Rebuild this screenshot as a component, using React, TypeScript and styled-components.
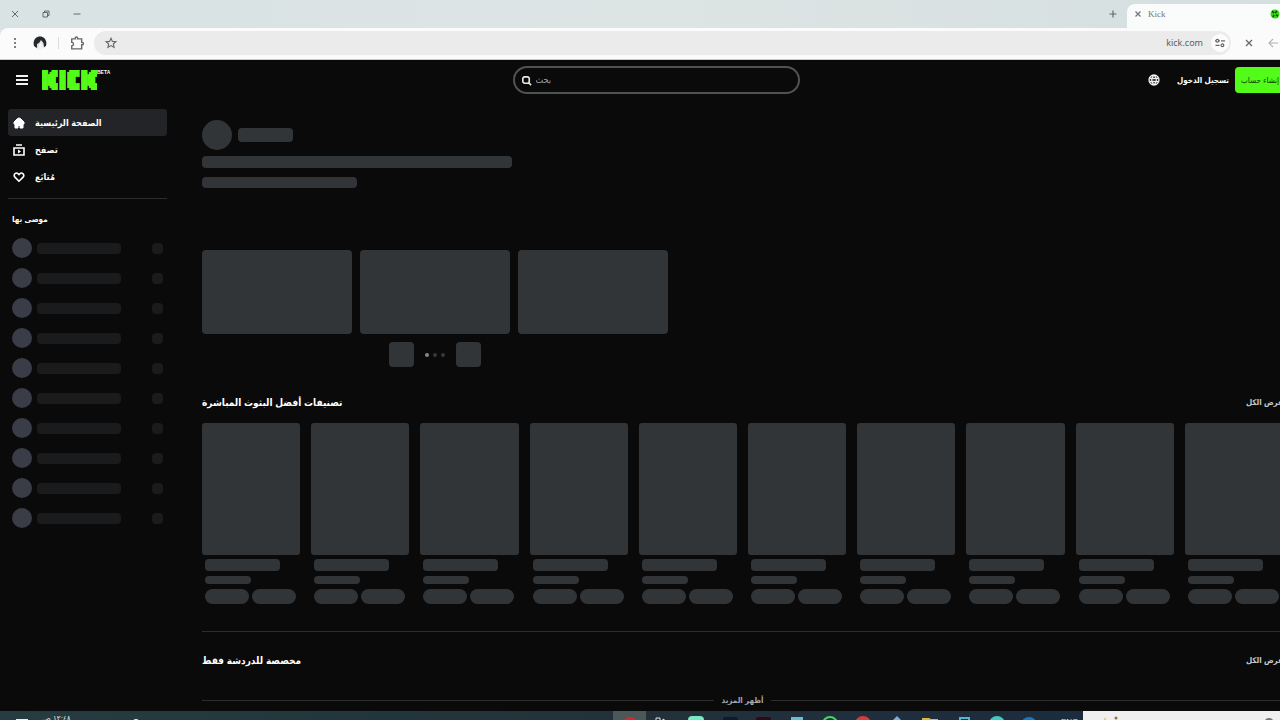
import React from "react";
import styled, { createGlobalStyle } from "styled-components";

const Global = createGlobalStyle`
  * { box-sizing: border-box; }
  html, body { margin: 0; background: #0a0a0a; }
  body { font-family: "Liberation Sans", "DejaVu Sans Condensed", "DejaVu Sans", sans-serif; overflow: hidden; }
  button, input { font: inherit; color: inherit; }
  button { border: 0; padding: 0; background: none; cursor: pointer; display: flex; align-items: center; justify-content: center; }
  a { color: inherit; text-decoration: none; }
  svg { display: block; flex: none; }
`;

/* The desktop runs past the right edge of the window, so the screen clips it. */
const Screen = styled.div`
  height: 100vh;
  overflow: hidden;
`;
const Desktop = styled.div`
  width: calc(100% + 20px);
  height: 100%;
  display: flex;
  flex-direction: column;
`;

/* ---------- browser chrome ---------- */
const Browser = styled.div`
  flex: none;
  background: linear-gradient(90deg, #d9e3e4, #dde4e4 50%, #d5dfe0);
  color: #64696b;
`;
const TabStrip = styled.div`
  height: 28px;
  display: flex;
  align-items: stretch;
`;
const WindowButtons = styled.div`
  flex: 1;
  display: flex;
  align-items: center;
  gap: 19px;
  padding-left: 9px;
`;
const IconButton = styled.button<{ $size?: number }>`
  width: ${(p) => p.$size ?? 12}px;
  height: ${(p) => p.$size ?? 12}px;
  flex: none;
`;
const NewTab = styled(IconButton)`
  align-self: center;
  margin-right: 8px;
`;
const Tab = styled.div`
  width: 173px;
  margin-top: 4px;
  padding: 0 20px 4px 5px;
  display: flex;
  align-items: center;
  gap: 4px;
  border-radius: 8px 8px 0 0;
  background: #fafbfb;
  font: 9px "Liberation Serif", serif;
  color: #777;
`;
const TabTitle = styled.span`
  flex: 1;
`;
const Toolbar = styled.div`
  height: 32px;
  padding: 0 21px 2px 8px;
  display: flex;
  align-items: center;
  background: #fbfbfb;
  border-bottom: 1px solid #c9c9c9;
  border-radius: 8px 0 0 0;
`;
const Tools = styled.div`
  display: flex;
  align-items: center;
  gap: 11px;
  margin-right: 10px;
`;
const ToolDivider = styled.span`
  width: 1px;
  height: 12px;
  background: #d8dcdc;
`;
const Omnibox = styled.div`
  flex: 1;
  height: 24px;
  padding: 0 2px 0 11px;
  display: flex;
  align-items: center;
  gap: 6px;
  border-radius: 12px;
  background: #ebebeb;
`;
const Address = styled.input`
  flex: 1;
  min-width: 0;
  border: 0;
  outline: 0;
  background: none;
  text-align: right;
  font: 9px "Noto Sans", sans-serif;
  color: #5e6060;
`;
const SiteInfo = styled(IconButton)`
  border-radius: 50%;
  background: #fcfcfc;
`;
const NavTools = styled.div`
  display: flex;
  gap: 12px;
  margin-left: 12px;
`;

/* ---------- site ---------- */
const Site = styled.div`
  flex: 1;
  min-height: 0;
  overflow: hidden;
  background: #0a0a0a;
  color: #fff;
`;
const Header = styled.header`
  height: 40px;
  padding: 0 4px 0 16px;
  display: grid;
  grid-template-columns: 1fr 287px 1fr;
  align-items: center;
`;
const Brand = styled.div`
  display: flex;
  align-items: center;
  gap: 14px;
`;
const LogoLink = styled.a`
  display: flex;
  align-items: flex-start;
`;
const Beta = styled.span`
  font: bold 5px/5px "Liberation Sans", sans-serif;
`;
const Search = styled.label`
  height: 28px;
  display: flex;
  align-items: center;
  gap: 4px;
  padding: 0 6px;
  border: 2px solid #515253;
  border-radius: 14px;
`;
const SearchInput = styled.input`
  flex: 1;
  min-width: 0;
  border: 0;
  outline: 0;
  padding: 0;
  background: none;
  font-size: 9px;
  &::placeholder { color: #a2a4a6; opacity: 1; }
`;
const Account = styled.div`
  display: flex;
  align-items: center;
  justify-content: flex-end;
`;
const Login = styled.a`
  margin: 0 10px 0 17px;
  width: 48px;
  white-space: nowrap;
  font-size: 8px;
  font-weight: bold;
`;
const SignUp = styled.button`
  width: 61px;
  height: 26px;
  border-radius: 4px;
  background: #53fc18;
  color: #0d3a04;
  font-size: 8px;
  white-space: nowrap;
  padding: 0 6px;
  justify-content: flex-start;
`;
const Body = styled.div`
  display: grid;
  grid-template-columns: 159px minmax(0, 1fr);
  column-gap: 35px;
  padding: 0 17px 0 8px;
`;
const Sidebar = styled.aside`
  padding-top: 9px;
`;
const NavItem = styled.a<{ $active?: boolean }>`
  height: 27px;
  padding-left: 5px;
  display: flex;
  align-items: center;
  gap: 10px;
  border-radius: 3px;
  background: ${(p) => (p.$active ? "#232427" : "transparent")};
  font-size: 9px;
  font-weight: bold;
`;
const Rule = styled.hr`
  width: 100%;
  height: 1px;
  margin: 0;
  border: 0;
  background: #2c2d2f;
`;
const SideRule = styled(Rule)`
  margin-top: 8px;
`;
const SideTitle = styled.h2`
  margin: 14px 4px 12px;
  font-size: 8px;
  line-height: 13px;
`;
const ChannelList = styled.ul`
  list-style: none;
  margin: 0;
  padding: 0 4px;
  display: flex;
  flex-direction: column;
  gap: 10px;
`;
const Channel = styled.li`
  display: flex;
  align-items: center;
  justify-content: space-between;
`;
const ChannelName = styled.span`
  display: flex;
  align-items: center;
  gap: 5px;
`;
const Bone = styled.span<{ $w?: number; $h: number; $r?: number; $tone?: string }>`
  display: block;
  flex: none;
  width: ${(p) => (p.$w ? `${p.$w}px` : "100%")};
  height: ${(p) => p.$h}px;
  border-radius: ${(p) => p.$r ?? 4}px;
  background: ${(p) => p.$tone ?? "#323538"};
`;
const Main = styled.main`
  padding-top: 20px;
`;
const Row = styled.div<{ $gap: number }>`
  display: flex;
  align-items: center;
  gap: ${(p) => p.$gap}px;
`;
const Intro = styled.section`
  display: flex;
  flex-direction: column;
  align-items: flex-start;
`;
const IntroLines = styled.div`
  display: flex;
  flex-direction: column;
  gap: 9px;
  margin-top: 6px;
`;
const Carousel = styled.section`
  width: 466px;
  margin-top: 62px;
`;
const Tiles = styled.div`
  display: grid;
  grid-template-columns: repeat(3, 1fr);
  gap: 8px;
`;
const Controls = styled.div`
  display: flex;
  justify-content: center;
  align-items: center;
  gap: 11px;
  margin-top: 8px;
`;
const Pager = styled.button`
  width: 25px;
  height: 25px;
  border-radius: 4px;
  background: #323538;
`;
const Dot = styled.span<{ $on?: boolean }>`
  width: 4px;
  height: 4px;
  border-radius: 50%;
  background: ${(p) => (p.$on ? "#85888a" : "#36393b")};
`;
const SectionHead = styled.div`
  height: 24px;
  display: flex;
  align-items: center;
  justify-content: space-between;
`;
const CategoryHead = styled(SectionHead)`
  margin: 23px 0 9px;
`;
const ChatHead = styled(SectionHead)`
  margin: 16px 0 20px;
`;
const Title = styled.h2`
  margin: 0;
  font-size: 10px;
`;
const ViewAll = styled.a`
  color: #c4c6c8;
  font-size: 8px;
  font-weight: bold;
`;
const Cards = styled.div`
  display: grid;
  grid-template-columns: repeat(10, minmax(0, 1fr));
  gap: 11px;
  margin-bottom: 27px;
`;
const CardText = styled.div`
  display: flex;
  flex-direction: column;
  padding: 4px 3px 0;
  gap: 5px;
`;
const ShowMore = styled.div`
  display: flex;
  align-items: center;
  gap: 7px;
`;
const MoreButton = styled.button`
  flex: none;
  height: 16px;
  color: #a4a6a8;
  font-size: 8px;
  font-weight: bold;
`;

/* ---------- taskbar ---------- */
const Taskbar = styled.footer`
  flex: none;
  height: 9px;
  overflow: hidden;
  display: flex;
  align-items: flex-start;
  background: linear-gradient(90deg, #263c41, #223139 50%, #1c2c40 84%);
`;
const Tray = styled.div`
  flex: 1;
  display: flex;
  padding: 2px 0 0 16px;
  color: #e8eef0;
`;
const Clock = styled.time`
  margin: 0 66px 0 14px;
  width: 24px;
  white-space: nowrap;
  font-size: 8px;
  line-height: 12px;
`;
const Apps = styled.div`
  width: 434px;
  display: grid;
  grid-template-columns: repeat(13, 1fr);
`;
const AppButton = styled.button<{ $active?: boolean }>`
  height: 30px;
  align-items: flex-start;
  padding-top: 5px;
  background: ${(p) => (p.$active ? "#4b5759" : "transparent")};
`;
const Lang = styled.span`
  width: 36px;
  padding: 6px 0 0 14px;
  color: #dfe6ea;
  font-size: 8px;
  line-height: 10px;
`;
const TaskSearch = styled.div`
  width: 217px;
  height: 30px;
  padding: 4px 0 0 16px;
  background: #efefef;
`;

type IconProps = { d: string; size?: number; w?: number; fill?: string; color?: string };
const Icon = ({ d, size = 12, w = 1, fill = "none", color = "currentColor" }: IconProps) => (
  <svg width={size} height={size} viewBox="0 0 12 12" fill={fill} stroke={color} strokeWidth={w} aria-hidden="true">
    <path d={d} />
  </svg>
);

/* Block pattern of the KICK logo: [x, y, width, height] on a 28 x 9 grid. */
const K = [
  [0, 0, 3, 9], [3, 2, 2, 5], [4, 1, 2, 7], [5, 0, 3, 3], [5, 2, 2, 5], [5, 6, 3, 3],
];
const blocks = [
  ...K,
  [9, 0, 3, 9],
  [13, 1, 3, 7], [14, 0, 5, 3], [14, 6, 5, 3], [16, 2, 1, 5],
  ...K.map(([x, y, w, h]) => [x + 20, y, w, h]),
];
const Logo = () => (
  <svg width="55" height="20" viewBox="0 0 28 9" preserveAspectRatio="none" fill="#53fc18" stroke="#53fc18" strokeWidth="0.3" aria-label="KICK">
    {blocks.map(([x, y, w, h], i) => (
      <rect key={i} x={x} y={y} width={w} height={h} />
    ))}
  </svg>
);

const apps = [
  ["متصفح", <circle cx="9" cy="9" r="8" fill="#d3282f" />],
  ["ملاحظات", <path d="M2 2h4v3h3V3l3 2 4 2v9H2z" fill="#22282c" stroke="#e6e6e6" />],
  ["دردشة", <rect x="1" y="0" width="16" height="16" rx="4" fill="#78e8c3" />],
  ["صور", <rect x="2" y="1" width="15" height="15" rx="2" fill="#0c1b30" />],
  ["فيديو", <rect x="2" y="1" width="15" height="15" rx="2" fill="#310914" />],
  ["مستندات", <path d="M3 1h12v15H3z" fill="#66bfd0" />],
  ["رسائل", <circle cx="9" cy="8" r="7" fill="#173927" stroke="#4bd35f" strokeWidth="2" />],
  ["موسيقى", <circle cx="9" cy="8" r="8" fill="#d83b3b" />],
  ["أدوات", <path d="M9 0l8 8-8 8-8-8z" fill="#82aadd" />],
  ["ملفات", <path d="M1 2h7l2 1h7v13H1z" fill="#d9b83c" />],
  ["هاتف", <rect x="5" y="2" width="9" height="14" fill="#173348" stroke="#4fb8d6" strokeWidth="2" />],
  ["متصفح ثان", <circle cx="9" cy="8" r="8" fill="#43c9c0" />],
  ["متجر", <circle cx="8" cy="9" r="8" fill="#1779bd" />],
] as const;

const HEART = "M6 10.2 1.9 6.1a2.3 2.3 0 0 1 0-3.3 2.4 2.4 0 0 1 3.3 0l.8.8.8-.8a2.4 2.4 0 0 1 3.3 0 2.3 2.3 0 0 1 0 3.3z";

export default function App() {
  return (
    <Screen>
      <Global />
      <Desktop>
        <Browser>
          <TabStrip>
            <WindowButtons>
              <IconButton aria-label="إغلاق"><Icon d="M3 3l6 6M9 3l-6 6" /></IconButton>
              <IconButton aria-label="استعادة"><Icon d="M3 4.5h4.5V9H3zM4.5 4.5V3H9v4.5H7.5" w={1} /></IconButton>
              <IconButton aria-label="تصغير"><Icon d="M2.5 6h7" /></IconButton>
            </WindowButtons>
            <NewTab aria-label="علامة تبويب جديدة"><Icon d="M6 2.5v7M2.5 6h7" w={1.2} /></NewTab>
            <Tab>
              <IconButton aria-label="إغلاق علامة التبويب"><Icon d="M3.5 3.5l5 5M8.500 3.500l-5 5" w={1.3} /></IconButton>
              <TabTitle>Kick</TabTitle>
              <svg width="10" height="10" viewBox="0 0 10 10" aria-hidden="true">
                <circle cx="5" cy="5" r="4.500" fill="#32d512" />
                <path d="M2 2l2 2M5 4l2-2M4 6l-1 2M6 6l2 1" stroke="#0b3d05" strokeWidth="1.400" />
              </svg>
            </Tab>
          </TabStrip>
          <Toolbar>
            <Tools>
              <IconButton aria-label="القائمة" $size={14}>
                <svg width="14" height="14" fill="#55585a"><circle cx="7" cy="3" r="1" /><circle cx="7" cy="7" r="1" /><circle cx="7" cy="11" r="1" /></svg>
              </IconButton>
              <IconButton aria-label="الملف الشخصي" $size={14}>
                <svg width="14" height="14" viewBox="0 0 14 14">
                  <circle cx="7" cy="7" r="6.500" fill="#dfe2e2" />
                  <path d="M1 10C-.5 4 3 .5 7 .5s7.500 3.500 6 9.500l-2 1-.5-4L8 4 6 7l-2 1v4z" fill="#24282b" />
                  <path d="M5 13l1-4 2-3 2 4v3z" fill="#f4f4f4" />
                </svg>
              </IconButton>
              <ToolDivider />
              <IconButton aria-label="الإضافات" $size={14}>
                <Icon size={14} w={1.2} d="M1.500 2.500h3V1.800a1 1 0 0 1 2 0v.7H10v3h.5a1 1 0 0 1 0 2H10V11H1.500V8.500a1.500 1.500 0 0 0 0-3z" />
              </IconButton>
            </Tools>
            <Omnibox>
              <IconButton aria-label="إضافة إشارة">
                <Icon w={1.1} d="M6 1.200l1.400 3.200 3.500.3-2.600 2.300.8 3.400L6 8.600l-3.100 1.800.8-3.400L1.100 4.700l3.500-.3z" />
              </IconButton>
              <Address aria-label="العنوان" defaultValue="kick.com" dir="ltr" />
              <SiteInfo aria-label="معلومات الموقع" $size={18}>
                <Icon w={1.2} d="M1 3.800h1M4.800 3.800H6M2 3.800a1.400 1.400 0 1 0 2.800 0 1.400 1.400 0 1 0-2.800 0M7 3.800h4M1.500 8.300h4M7 8.300a1.400 1.400 0 1 0 2.800 0 1.400 1.400 0 1 0-2.800 0" />
              </SiteInfo>
            </Omnibox>
            <NavTools>
              <IconButton aria-label="إيقاف"><Icon w={1.3} d="M3 3l6 6M9 3l-6 6" /></IconButton>
              <IconButton aria-label="رجوع"><Icon w={1.2} color="#b0b3b4" d="M11 6H2M6 2L2 6l4 4" /></IconButton>
            </NavTools>
          </Toolbar>
        </Browser>

        <Site>
          <Header>
            <Brand>
              <IconButton aria-label="القائمة الجانبية"><Icon w={1.8} color="#f2f2f2" d="M0 2h12M0 6h12M0 10h12" /></IconButton>
              <LogoLink href="#home"><Logo /><Beta>BETA</Beta></LogoLink>
            </Brand>
            <Search>
              <Icon size={11} w={1.8} color="#e4e4e4" d="M2 3.500L3.500 2h4L9 3.500v4L7.500 9h-4L2 7.500zM8 8l3 3" />
              <SearchInput aria-label="بحث" placeholder="بحث" />
            </Search>
            <Account>
              <IconButton aria-label="اللغة">
                <Icon w={1.3} color="#f0f0f0" d="M6 1a5 5 0 1 0 0 10A5 5 0 1 0 6 1zM6 1C3 4 3 8 6 11M6 1c3 3 3 7 0 10M1 4.500h10M1 7.500h10" />
              </IconButton>
              <Login href="#login">تسجيل الدخول</Login>
              <SignUp>إنشاء حساب</SignUp>
            </Account>
          </Header>

          <Body>
            <Sidebar>
              <nav>
                <NavItem href="#home" $active>
                  <Icon fill="#fff" w={1} d="M6 1l1.500.5L11 5v2h-1v4H7V8.500H5V11H2V7H1V5l3.500-3.500z" />
                  الصفحة الرئيسية
                </NavItem>
                <NavItem href="#browse">
                  <svg width="12" height="12" viewBox="0 0 12 12" fill="none" stroke="#fff" strokeWidth="1.600">
                    <path d="M1 4h10v7H1zM3 1h6" /><path d="M5 5.600L8 7.500 5 9.400z" fill="#fff" stroke="none" />
                  </svg>
                  تصفح
                </NavItem>
                <NavItem href="#following"><Icon w={1.6} d={HEART} />مُتابَع</NavItem>
              </nav>
              <SideRule />
              <SideTitle>موصى بها</SideTitle>
              <ChannelList>
                {Array.from({ length: 10 }, (_, i) => (
                  <Channel key={i}>
                    <ChannelName>
                      <Bone $w={20} $h={20} $r={10} $tone="#3a3c47" />
                      <Bone $w={84} $h={11} $tone="#1a1b1d" />
                    </ChannelName>
                    <Bone $w={11} $h={11} $tone="#1a1b1d" />
                  </Channel>
                ))}
              </ChannelList>
            </Sidebar>

            <Main>
              <Intro>
                <Row $gap={6}>
                  <Bone $w={30} $h={30} $r={15} />
                  <Bone $w={55} $h={14} />
                </Row>
                <IntroLines>
                  <Bone $w={310} $h={12} />
                  <Bone $w={155} $h={11} />
                </IntroLines>
              </Intro>
              <Carousel>
                <Tiles><Bone $h={84} /><Bone $h={84} /><Bone $h={84} /></Tiles>
                <Controls>
                  <Pager aria-label="السابق" />
                  <Row $gap={4}><Dot $on /><Dot /><Dot /></Row>
                  <Pager aria-label="التالي" />
                </Controls>
              </Carousel>

              <CategoryHead>
                <Title>تصنيفات أفضل البثوث المباشرة</Title>
                <ViewAll href="#categories">عرض الكل</ViewAll>
              </CategoryHead>
              <Cards>
                {Array.from({ length: 10 }, (_, i) => (
                  <div key={i}>
                    <Bone $h={132} $r={3} />
                    <CardText>
                      <Bone $w={75} $h={12} />
                      <Bone $w={46} $h={8} />
                      <Row $gap={3}>
                        <Bone $w={44} $h={15} $r={8} />
                        <Bone $w={44} $h={15} $r={8} />
                      </Row>
                    </CardText>
                  </div>
                ))}
              </Cards>
              <Rule />
              <ChatHead>
                <Title>مخصصة للدردشة فقط</Title>
                <ViewAll href="#chat">عرض الكل</ViewAll>
              </ChatHead>
              <ShowMore>
                <Rule />
                <MoreButton>أظهر المزيد</MoreButton>
                <Rule />
              </ShowMore>
            </Main>
          </Body>
        </Site>

        <Taskbar>
          <Tray>
            <svg width="12" height="14" viewBox="0 0 12 14"><path d="M0 6h12v7H0z" fill="#e8eef0" /></svg>
            <Clock>١٢:٤٨ ص</Clock>
            <svg width="8" height="14" viewBox="0 0 8 14"><circle cx="4" cy="9" r="3" fill="#e8eef0" /></svg>
          </Tray>
          <Apps>
            {apps.map(([name, art], i) => (
              <AppButton key={name} aria-label={name} $active={i === 0}>
                <svg width="18" height="18" viewBox="0 0 18 18">{art}</svg>
              </AppButton>
            ))}
          </Apps>
          <Lang>ENG</Lang>
          <TaskSearch>
            <svg width="190" height="16" viewBox="0 0 190 16">
              <path d="M6 2l4 12H2z" fill="#e2c838" /><circle cx="17" cy="3" r="1.500" fill="#8d6f4a" />
              <circle cx="170" cy="8" r="4" fill="none" stroke="#777" strokeWidth="2" />
            </svg>
          </TaskSearch>
        </Taskbar>
      </Desktop>
    </Screen>
  );
}
